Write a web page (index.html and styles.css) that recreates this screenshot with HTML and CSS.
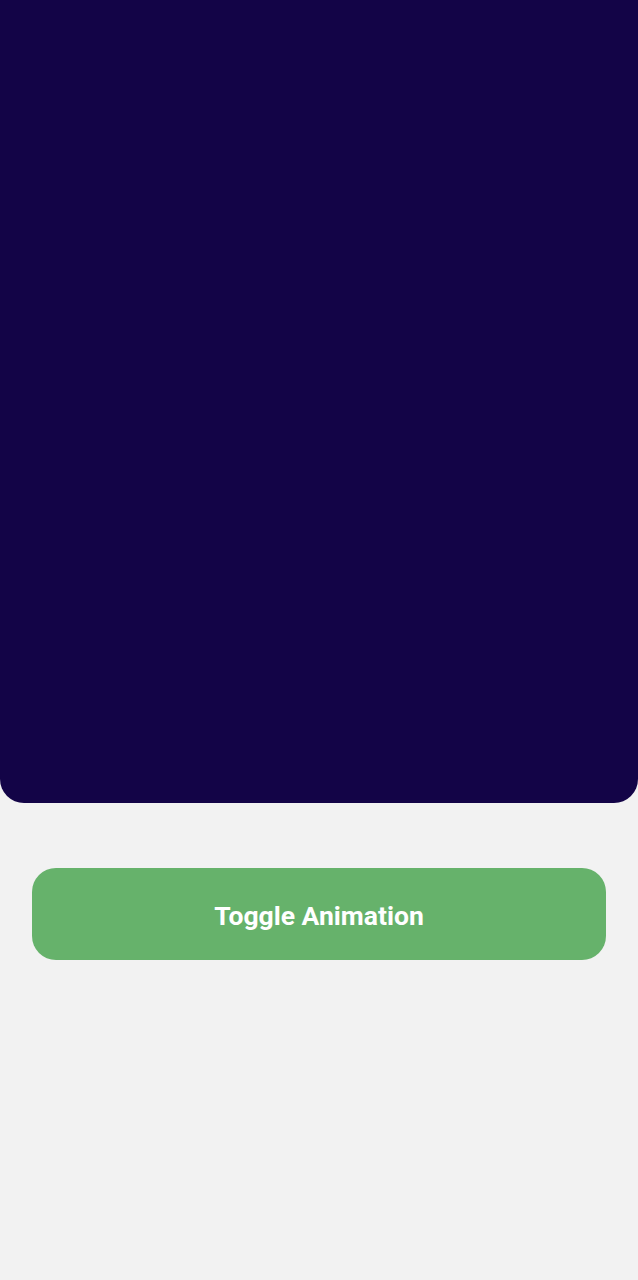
FILE: index.html
```html
<!DOCTYPE html>
<html>
<head>
<meta charset="utf-8">
<link rel="stylesheet" href="styles.css">
</head>
<body>
<div class="screen">
  <div class="stage"></div>
  <div class="controls">
    <button class="toggle">Toggle Animation</button>
  </div>
</div>
</body>
</html>
```

FILE: styles.css
```css
* { box-sizing: border-box; }
html, body { margin: 0; padding: 0; }
body {
  background: #f2f2f2;
  font-family: Roboto, "Liberation Sans", sans-serif;
  width: 638px;
  height: 1280px;
  overflow: hidden;
}
.screen {
  display: flex;
  flex-direction: column;
}
.stage {
  height: 803px;
  background: #130447;
  border-radius: 0 0 24px 24px;
}
.controls {
  padding: 65px 32px 0;
}
.toggle {
  display: block;
  width: 100%;
  height: 92px;
  border: none;
  border-radius: 24px;
  background: #66b26b;
  color: #ffffff;
  font-family: Roboto, "Liberation Sans", sans-serif;
  font-weight: 700;
  font-size: 26.5px;
  padding: 2px 0 0;
  margin: 0;
}
```
